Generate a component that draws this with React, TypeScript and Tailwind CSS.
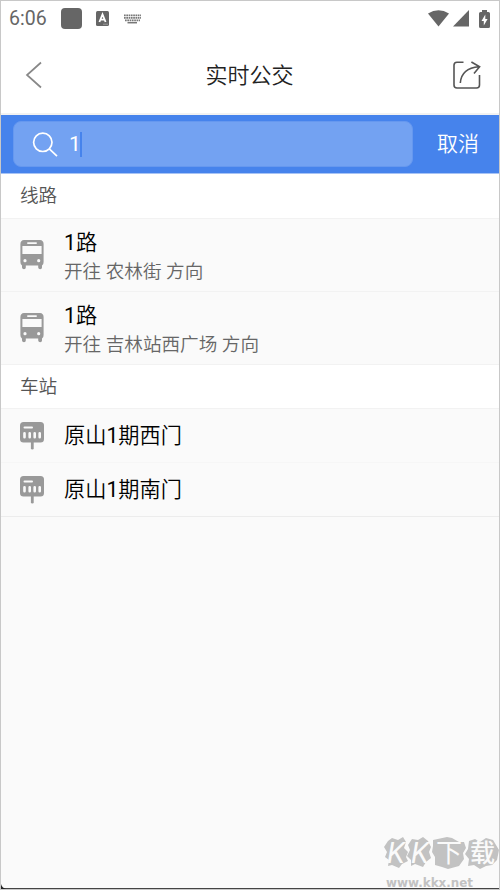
import type { ReactNode } from 'react';

interface Route {
  id: string;
  name: string;
  direction: string;
}

const routes: Route[] = [
  { id: 'route-1', name: '1路', direction: '农林街' },
  { id: 'route-2', name: '1路', direction: '吉林站西广场' },
];

const stations = ['原山1期西门', '原山1期南门'];

// Digits are set one step heavier than the Chinese text around them
function MixedText({ text }: { text: string }) {
  return (
    <>
      {text.split(/(\d+)/).map((part, i) =>
        /\d/.test(part) ? (
          <span key={i} className="font-normal">
            {part}
          </span>
        ) : (
          part
        ),
      )}
    </>
  );
}

function BusIcon() {
  return (
    <svg width="24" height="30" viewBox="0 0 24 30" className="shrink-0">
      <path
        fillRule="evenodd"
        fill="#999999"
        d="M4 0H20Q23.5 .3 23.6 4V22Q23.6 25 22 25.5V27.5Q22 29.3 20.2 29.3T18.2 27.5V25.6H5.8V27.5Q5.8 29.3 4 29.3T2 27.5V25.5Q.4 25 .4 22V4Q.5 .3 4 0ZM8 2.2Q7 2.2 7 3.1T8 4H16Q17 4 17 3.1T16 2.2ZM2.4 6V14H21.6V6ZM5 19.1A1.6 1.6 0 1 0 5 22.3A1.6 1.6 0 1 0 5 19.1ZM18.7 19.1A1.6 1.6 0 1 0 18.7 22.3A1.6 1.6 0 1 0 18.7 19.1Z"
      />
    </svg>
  );
}

function StationIcon() {
  return (
    <svg width="24" height="28" viewBox="0 0 24 28" className="shrink-0">
      <rect width="24" height="20.5" rx="3.5" fill="#999999" />
      <path d="M12.3 20V26.2" stroke="#999999" strokeWidth="2.8" strokeLinecap="round" />
      <path d="M4.5 5.5H12" stroke="#fafafa" strokeWidth="2" strokeLinecap="round" />
      <path
        d="M4.5 11.3V15.3M9.7 11.3V15.3M14.7 11.3V15.3M19.7 11.3V15.3"
        stroke="#fafafa"
        strokeWidth="2.6"
        strokeLinecap="round"
      />
    </svg>
  );
}

function StatusBar() {
  return (
    <div className="flex h-[35px] items-center pl-2 pr-[9px] text-[#666666]">
      <span className="w-[52px] text-[19.5px] font-normal leading-none">6:06</span>
      <div className="size-[21px] rounded bg-[#666666]" />
      <svg width="13" height="15" viewBox="0 0 13 15" className="ml-[14px]">
        <rect width="13" height="15" rx="1.5" fill="#666666" />
        <path d="M3.4 11 6.5 3.4 9.6 11M4.7 8.7H8.3" fill="none" stroke="#fff" strokeWidth="1.8" />
        <path d="M7 13.2H12" stroke="#aaa" strokeWidth=".8" />
      </svg>
      <svg width="17" height="10" viewBox="0 0 17 10" className="ml-[15px]">
        <path
          d="M0 1.3H17M0 3.9H17M1 6.4H16"
          stroke="#777"
          strokeWidth="1.7"
          strokeDasharray="1.7 .6"
        />
        <path d="M3.5 8.7H13" stroke="#777" strokeWidth="1.5" />
      </svg>
      <div className="ml-auto flex items-center">
        <svg width="21" height="17" viewBox="0 0 21 17">
          <path d="M0 3.5Q10.5-3 21 3.5L10.5 16.5Z" fill="#666666" />
        </svg>
        <svg width="16" height="17" viewBox="0 0 16 17" className="ml-1">
          <path d="M16 0V16.5H0Z" fill="#666666" />
        </svg>
        <svg width="11" height="18" viewBox="0 0 11 18" className="ml-[10px]">
          <path d="M3 0H8V2H9.5Q11 2 11 3.5V16.5Q11 18 9.5 18H1.5Q0 18 0 16.5V3.5Q0 2 1.5 2H3Z" fill="#666666" />
          <path d="M6.3 4.5 2.5 11H4.8V15.5L8.6 9H6.3Z" fill="#fff" />
        </svg>
      </div>
    </div>
  );
}

function Header() {
  return (
    <header className="flex h-[79px] items-center justify-between border-b-2 border-[#f2f2f2] pl-6 pr-[18px]">
      <svg width="22" height="28" viewBox="0 0 22 28" fill="none" stroke="#888888" strokeWidth="1.7">
        <path d="M16 1.5 2 14 16 26.5" />
      </svg>
      <h1 className="pt-[3px] text-[22px] leading-none text-[#222222]">实时公交</h1>
      <svg width="29" height="28" viewBox="0 0 29 28" fill="none" stroke="#555555" strokeWidth="1.6">
        <path d="M11.5 1.2H5Q2 1.2 2 4.2V24Q2 27 5 27H24.5Q27.5 27 27.5 24V14" />
        <path d="M8.3 22Q9.5 7.2 27 5.8M19.4 1 27.6 5.8 22 12.5" />
      </svg>
    </header>
  );
}

function SearchBar() {
  return (
    <div className="flex h-[59px] items-center border-b border-[#a7c3f5] bg-[#4683ec] pl-3 pr-5">
      <div className="flex h-[46px] w-[400px] items-center rounded-lg border border-[#6698ef] bg-[#73a2f2] pl-[18px]">
        <svg width="26" height="26" viewBox="0 0 26 26" fill="none" stroke="#fff" strokeWidth="1.7">
          <circle cx="10.8" cy="11.3" r="9.2" />
          <path d="M17.3 17.8 25 25.2" />
        </svg>
        <span className="ml-[11px] text-[21px] font-normal leading-none text-white">1</span>
        <span className="-ml-px h-[25px] w-[2px] bg-[#4683ec]" />
      </div>
      <button className="ml-auto text-[21px] leading-none text-white">取消</button>
    </div>
  );
}

function SectionTitle({ first = false, children }: { first?: boolean; children: ReactNode }) {
  return (
    <h2
      className={`flex items-center border-b border-[#f2f2f2] bg-white pl-[19px] text-[18.6px] leading-none text-[#555555] ${
        first ? 'h-[45px]' : 'h-11 pt-px'
      }`}
    >
      {children}
    </h2>
  );
}

function Watermark() {
  return (
    <div className="absolute bottom-0 right-0 h-[54px] w-[117px]">
      <svg width="117" height="54" viewBox="0 0 117 54">
        <g fill="#c2c2c2" transform="translate(2 0)">
          <path d="M4 6 8 3 14 5 19 2 22 7 20 13 24 17 22 22 24 26 18 29 15 33 8 30 4 31 5 25 1 22 3 17 0 12Z" />
          <path d="M28 4 34 5 39 2 44 6 47 12 45 17 47 23 42 27 39 32 31 29 27 31 27 25 23 21 26 15 24 10Z" />
          <path d="M49 5 63 2 68 3 75 7 80 7 82 13 79 18 80 24 75 31 64 34 58 32 51 30 51 22 48 17 49 11Z" />
          <path d="M85 6 91 4 96 7 102 3 109 5 112 10 115 15 113 25 108 30 102 31 96 34 90 30 84 31 85 24 81 19 84 14Z" />
        </g>
        <g fill="#fafafa" fontFamily="Roboto, 'Noto Sans CJK SC', sans-serif" fontWeight="400">
          <text x="5" y="28" fontSize="29" fontStyle="italic">K</text>
          <text x="29" y="28" fontSize="29" fontStyle="italic">K</text>
          <text x="54" y="27" fontSize="26">下</text>
          <text x="88" y="27" fontSize="25" fontWeight="500">载</text>
        </g>
        <text
          x="4"
          y="52"
          fill="#c2c2c2"
          fontFamily="'DejaVu Sans', sans-serif"
          fontSize="11.5"
          fontWeight="700"
          textLength="87"
          lengthAdjust="spacingAndGlyphs"
        >
          www.kkx.net
        </text>
      </svg>
    </div>
  );
}

export default function App() {
  return (
    <div className="relative flex h-[890px] w-[500px] flex-col overflow-hidden border border-[#c8c8c8] bg-[#fafafa] font-[Roboto,'Noto_Sans_CJK_SC',sans-serif] font-[350]">
      <div className="bg-white">
        <StatusBar />
        <Header />
      </div>
      <SearchBar />

      <SectionTitle first>线路</SectionTitle>
      {routes.map((route) => (
        <div key={route.id} className="flex h-[73px] items-center border-b border-[#f2f2f2] pl-[19px]">
          <BusIcon />
          <div className="ml-5 flex flex-col gap-[9px] pt-1">
            <div className="text-[21.2px] leading-[21px] text-black">
              <MixedText text={route.name} />
            </div>
            <div className="text-[18.6px] leading-5 text-[#666666]">开往 {route.direction} 方向</div>
          </div>
        </div>
      ))}

      <SectionTitle>车站</SectionTitle>
      <div>
        {stations.map((station) => (
          <div
            key={station}
            className="flex h-[54px] items-center border-b border-[#f6f6f6] pl-[19px] last:border-[#ececec]"
          >
            <StationIcon />
            <span className="ml-5 text-[21.2px] leading-none text-black">
              <MixedText text={station} />
            </span>
          </div>
        ))}
      </div>

      <Watermark />
      <div className="mt-auto h-px bg-[#444444]" />
      <svg width="5" height="5" viewBox="0 0 5 5" className="absolute bottom-0 left-0">
        <path d="M0 0Q1 4 5 5H0Z" fill="#222222" />
      </svg>
    </div>
  );
}
